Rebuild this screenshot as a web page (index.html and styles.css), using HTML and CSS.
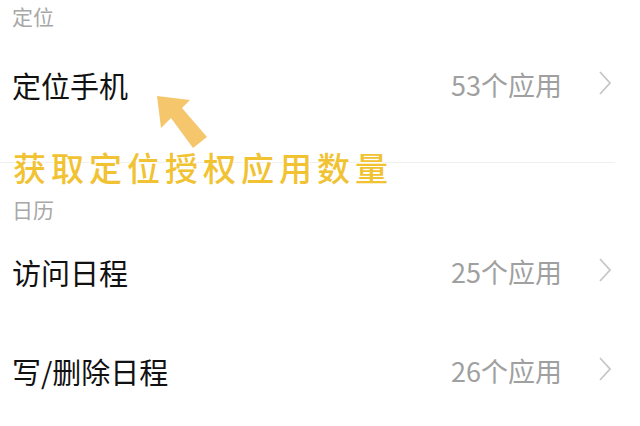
FILE: index.html
```html
<!DOCTYPE html>
<html lang="zh-CN">
<head>
    <meta charset="UTF-8">
    <title>权限管理</title>
    <link rel="stylesheet" href="styles.css">
</head>
<body>
<div class="page">
    <div class="section first">
        <div class="section-title">定位</div>
        <div class="row">
            <span class="row-name">定位手机</span>
            <span class="row-count">53个应用</span>
            <svg class="chevron" viewBox="0 0 14 26"><path d="M2 2 L12 13 L2 24" /></svg>
        </div>
    </div>

    <div class="section">
        <div class="section-title">日历</div>
        <div class="row">
            <span class="row-name">访问日程</span>
            <span class="row-count">25个应用</span>
            <svg class="chevron" viewBox="0 0 14 26"><path d="M2 2 L12 13 L2 24" /></svg>
        </div>
        <div class="row">
            <span class="row-name">写/删除日程</span>
            <span class="row-count">26个应用</span>
            <svg class="chevron" viewBox="0 0 14 26"><path d="M2 2 L12 13 L2 24" /></svg>
        </div>
    </div>

    <!-- 标注 -->
    <svg class="note-arrow" viewBox="0 0 65 65">
        <polygon points="7,6 11,38 21,28 43,58 57,47 32,18 40,10" />
    </svg>
    <div class="note-text">获取定位授权应用数量</div>
</div>
</body>
</html>
```

FILE: styles.css
```css
body {
    margin: 0;
    background: #fff;
    font-family: "Noto Sans CJK SC", "Noto Sans", sans-serif;
}
.page {
    position: relative;
    width: 640px;
    height: 426px;
    overflow: hidden;
}
.section {
    padding-top: 33px;
}
.section.first {
    padding-top: 0;
    margin-top: -27px;
    padding-bottom: 28px;
    margin-right: 25px;
    border-bottom: 1px solid #f0f0f0;
}
.section-title {
    height: 26px;
    line-height: 26px;
    padding-left: 12px;
    font-size: 21px;
    color: #a8a8a8;
}
.section.first .section-title {
    padding-top: 24px;
    height: 38px;
    line-height: 38px;
}
.row {
    display: flex;
    align-items: center;
    height: 99px;
    padding: 0 28px 0 12px;
}
.section.first .row {
    margin-right: -25px;
}
.row-name {
    flex: 1;
    font-size: 29px;
    color: #111;
}
.row-count {
    font-size: 27px;
    color: #a0a0a0;
    margin-right: 36px;
}
.chevron {
    width: 14px;
    height: 26px;
    margin-top: -4px;
    fill: none;
    stroke: #c6c6c6;
    stroke-width: 1.8;
}
.note-arrow {
    position: absolute;
    left: 150px;
    top: 90px;
    width: 65px;
    height: 65px;
    fill: #f5c66b;
}
.note-text {
    position: absolute;
    left: 13px;
    top: 143px;
    font-size: 33px;
    font-weight: 500;
    letter-spacing: 5px;
    color: #f1c232;
    text-shadow: 0 0 3px #fff, 0 0 3px #fff;
}
```
